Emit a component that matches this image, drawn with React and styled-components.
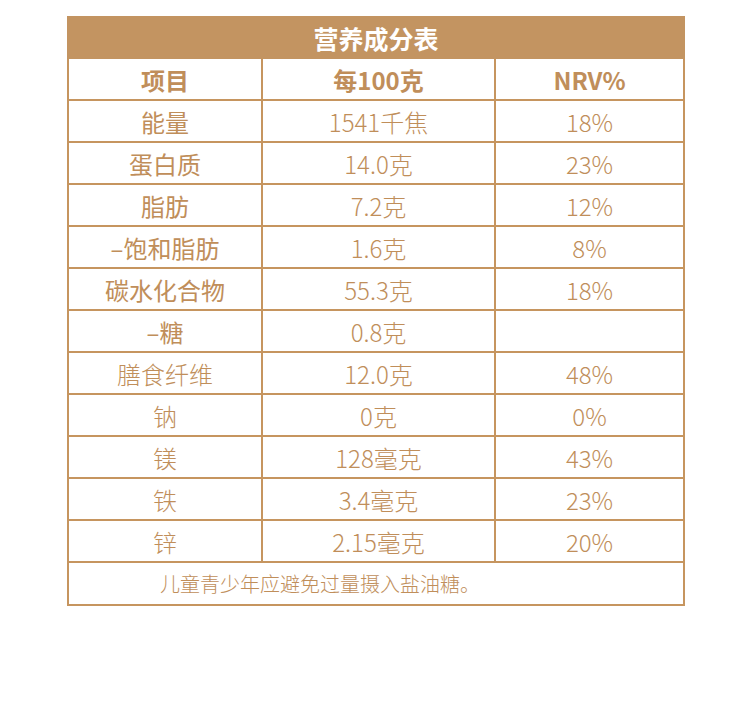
import styled, { createGlobalStyle } from 'styled-components';

const GlobalStyle = createGlobalStyle`
	body {
		margin: 0;
		background: #ffffff;
		font-family: "Noto Sans CJK SC", "Noto Sans", sans-serif;
	}
`;

const Page = styled.div`
	width: 750px;
	height: 703px;
	padding-top: 16px;
	padding-left: 67px;
	box-sizing: border-box;
`;

const Table = styled.div`
	width: 618px;
	box-sizing: border-box;
	border: 2px solid #c6955f;
	border-top: none;
	display: grid;
	grid-template-columns: 192px 233px 189px;
`;

const TitleRow = styled.div`
	grid-column: 1 / -1;
	height: 43px;
	margin: 0 -2px;
	background: #c39461;
	color: #ffffff;
	font-size: 25px;
	font-weight: 700;
	display: flex;
	align-items: center;
	justify-content: center;
`;

const Cell = styled.div`
	height: 40px;
	border-top: ${(p) => (p.$first ? 'none' : '2px solid #c6955f')};
	border-left: ${(p) => (p.$col > 0 ? '2px solid #c6955f' : 'none')};
	display: flex;
	align-items: center;
	justify-content: center;
	color: #c08e5a;
	font-size: 24px;
	font-weight: ${(p) => p.$weight || 300};
	white-space: nowrap;
`;

const NoteRow = styled.div`
	grid-column: 1 / -1;
	height: 41px;
	border-top: 2px solid #c6955f;
	padding-left: 91px;
	display: flex;
	align-items: center;
	color: #c08e5a;
	font-size: 20px;
	font-weight: 300;
`;

const rows = [
	['能量', '1541千焦', '18%', 400],
	['蛋白质', '14.0克', '23%', 400],
	['脂肪', '7.2克', '12%', 400],
	['–饱和脂肪', '1.6克', '8%', 400],
	['碳水化合物', '55.3克', '18%', 400],
	['–糖', '0.8克', '', 400],
	['膳食纤维', '12.0克', '48%', 300],
	['钠', '0克', '0%', 300],
	['镁', '128毫克', '43%', 300],
	['铁', '3.4毫克', '23%', 300],
	['锌', '2.15毫克', '20%', 300],
];

const App = () => {
	return (
		<>
			<GlobalStyle />
			<Page>
				<Table>
					<TitleRow>营养成分表</TitleRow>
					<Cell $first $col={0} $weight={700}>项目</Cell>
					<Cell $first $col={1} $weight={700}>每100克</Cell>
					<Cell $first $col={2} $weight={700}>NRV%</Cell>
					{rows.map(([name, amount, nrv, w]) => (
						<>
							<Cell key={name + 'a'} $col={0} $weight={w}>{name}</Cell>
							<Cell key={name + 'b'} $col={1}>{amount}</Cell>
							<Cell key={name + 'c'} $col={2}>{nrv}</Cell>
						</>
					))}
					<NoteRow>儿童青少年应避免过量摄入盐油糖。</NoteRow>
				</Table>
			</Page>
		</>
	);
};

export default App;
